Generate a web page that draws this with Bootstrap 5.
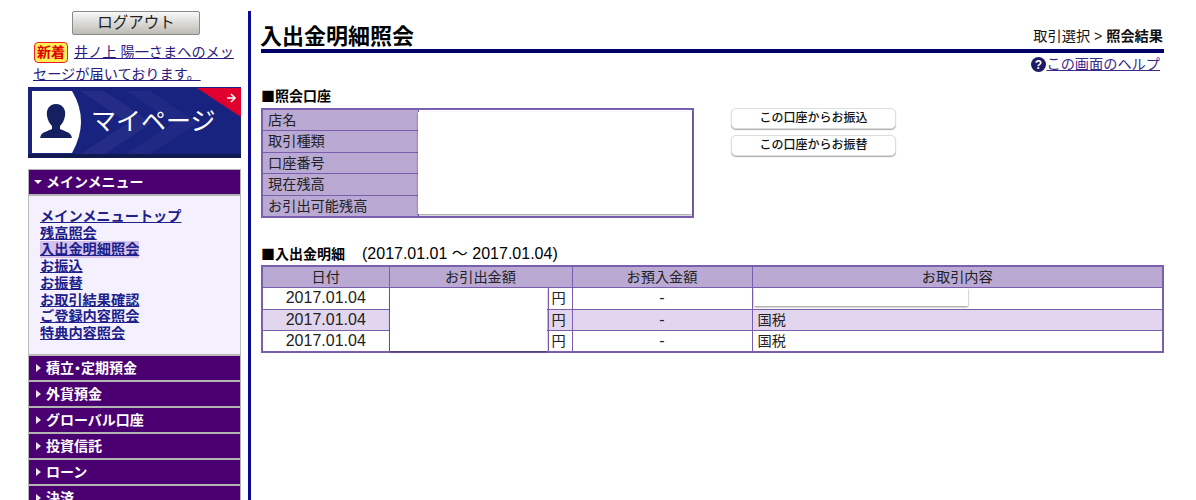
<!DOCTYPE html>
<html lang="ja">
<head>
<meta charset="UTF-8">
<title>入出金明細照会</title>
<link href="https://cdn.jsdelivr.net/npm/bootstrap@5.3.3/dist/css/bootstrap.min.css" rel="stylesheet">
<script src="https://cdn.jsdelivr.net/npm/bootstrap@5.3.3/dist/js/bootstrap.bundle.min.js"></script>
<style>
html, body { height: 500px; overflow: hidden; }
body { font-family: "Liberation Sans", "Noto Sans CJK JP", sans-serif; font-size: 14px; color: #111; background: #fff; }
.page-wrap { height: 500px; overflow: hidden; }
.side-col { width: 248px; flex: none; padding: 11px 7px 0 28px; }
.bar-col { width: 3px; flex: none; background: #0a0a96; margin-top: 11px; }
.main-col { flex: 1; padding: 0 32px 0 10px; }

.logout-btn { display: block; width: 128px; height: 24px; margin-left: 44px; padding: 0; font-size: 15.5px; line-height: 22px; color: #222; border: 1px solid #8a8a8a; border-radius: 2px; background: linear-gradient(#f8f8f8, #bdbcb4); }
.news-text { margin: 6px 0 0 5px; font-size: 14.2px; line-height: 22px; height: 46px; width: 206px; }
.news-text a { color: #2b1a80; }
.new-tag { display: inline-block; padding: 0 2px; line-height: 19px; font-weight: 700; font-size: 14px; color: #e00000; background: #ffee55; border: 1px solid #f02020; border-radius: 4px; margin: 0 2px 0 1px; }
.page-banner { display: block; width: 213px; height: 71px; }

.menu-head { display: flex; align-items: center; padding-left: 5px; background: #4b0072; color: #fff; font-weight: 700; font-size: 14px; border: 1px solid #b4b4b4; border-bottom-width: 2px; height: 27px; }
.menu-box { margin-top: 11px; }
.menu-body { height: 160px; padding: 12px 0 0 11px; background: #f4f0fe; border: 1px solid #bbb; border-top: 0; border-bottom-width: 2px; line-height: 16.7px; }
.menu-body a { display: block; width: fit-content; color: #20208a; font-weight: 700; font-size: 14.2px; }
.menu-body a.is-current { background: #d4c0ea; }
.arrow-down { width: 0; height: 0; margin-right: 4px; border-left: 4px solid transparent; border-right: 4px solid transparent; border-top: 4px solid #fff; }
.arrow-right { width: 0; height: 0; margin: 0 5px 0 2px; border-top: 4px solid transparent; border-bottom: 4px solid transparent; border-left: 5px solid #e8e8e8; }
.menu-closed { height: 26px; border-top: 0; }
.dot-tight { font-feature-settings: "palt"; }

.title-row { height: 53px; border-bottom: 4px solid #000066; }
.page-title { font-size: 22px; font-weight: 700; line-height: 26px; margin: 0 0 -1px -1px; color: #000; }
.crumbs { font-size: 14.2px; line-height: 18px; margin-bottom: 4px; margin-right: 1px; }
.help-row { height: 34px; padding: 3px 4px 0 0; line-height: 16px; }
.help-row a { color: #3a2a8c; font-size: 14.2px; }
.help-icon { display: inline-block; vertical-align: -3px; }
.sect-label { font-family: "Noto Sans CJK JP", sans-serif; font-size: 14px; font-weight: 700; line-height: 17px; margin: 0 0 4px; color: #000; }
.sect-label span { font-family: "Liberation Sans", "Noto Sans CJK JP", sans-serif; font-size: 16px; font-weight: 400; margin-left: 17px; }
.sect-tight { margin-bottom: 3px; }

.grid-wrap { position: relative; }
.acct-table { width: 433px; table-layout: fixed; }
.detail-table { width: 903px; table-layout: fixed; }
.acct-table, .detail-table { border-collapse: collapse; margin: 0; border: 2px solid #7a5fae; }
.acct-table > :not(caption) > * > *, .detail-table > :not(caption) > * > * { padding: 0 5px; border: 1px solid #7a5fae; font-size: 14.2px; line-height: 20px; height: 21.5px; color: #222; background: #fff; box-shadow: none; font-weight: 400; }
.acct-table > :not(caption) > * > th, .detail-table > :not(caption) > * > th { background: #b9a9d3; }
.detail-table > :not(caption) > * > th { text-align: center; }
.detail-table > :not(caption) > .row-alt > td { background: #e2d6ee; }
.detail-table > :not(caption) > * > .cell-mid { text-align: center; font-size: 16px; }
.detail-table > :not(caption) > * > .cell-yen { padding: 0 0 0 3px; }
.cover-box { position: absolute; background: #fff; box-shadow: 0 1px 2px rgba(0,0,0,.45); }
.cover-acct { left: 157px; top: 4px; width: 274px; height: 102px; }
.cover-amount { left: 129px; top: 23px; width: 157px; height: 63px; }
.cover-memo { left: 493px; top: 23px; width: 214px; height: 18px; }
.side-btn { display: block; width: 165px; height: 21px; padding: 0; font-size: 12px; line-height: 19px; font-weight: 500; color: #111; background: #fff; border: 1px solid #ddd; border-radius: 5px; box-shadow: 0 1px 1px #aaa; margin-bottom: 6px; }
.acct-row { gap: 37px; height: 137px; }
</style>
</head>
<body>
<div class="page-wrap d-flex">
  <!-- left menu -->
  <div class="side-col">
    <button type="button" class="logout-btn">ログアウト</button>
    <p class="news-text"><span class="new-tag">新着</span> <a href="#">井ノ上 陽一さまへのメッセージが届いております。</a></p>
    <svg class="page-banner" viewBox="0 0 213 71">
      <rect width="213" height="71" fill="#17237f"/>
      <path d="M52 4 L100 36 L52 67 H76 L124 36 L76 4 Z" fill="#242c86"/>
      <path d="M98 4 L146 36 L98 67 H122 L170 36 L122 4 Z" fill="#202a84"/>
      <path d="M4 4 H44 Q62 34 44 66 H4 Z" fill="#fff"/>
      <path d="M28 17 C21 17 18 23 19 29 C20 34 22 37 24 39 L24 42 C20 44 15 45 13 48 L12 51 H44 L43 48 C41 45 36 44 32 42 L32 39 C34 37 36 34 37 29 C38 23 35 17 28 17 Z" fill="#14205f"/>
      <path d="M169 1 H213 V30 Z" fill="#e0002d"/>
      <path d="M199 11 H207 M203 7 L207 11 L203 15" fill="none" stroke="#fff" stroke-width="1.6"/>
      <rect y="67" width="213" height="4" fill="#101a50"/>
      <text x="63" y="43" font-size="25" fill="#fff" font-family="Liberation Sans, Noto Sans CJK JP, sans-serif">マイページ</text>
    </svg>

    <div class="menu-box">
      <div class="menu-head"><span class="arrow-down"></span>メインメニュー</div>
      <div class="menu-body">
        <a href="#">メインメニュートップ</a>
        <a href="#">残高照会</a>
        <a href="#" class="is-current">入出金明細照会</a>
        <a href="#">お振込</a>
        <a href="#">お振替</a>
        <a href="#">お取引結果確認</a>
        <a href="#">ご登録内容照会</a>
        <a href="#">特典内容照会</a>
      </div>
      <div class="menu-head menu-closed"><span class="arrow-right"></span><span>積立<span class="dot-tight">・</span>定期預金</span></div>
      <div class="menu-head menu-closed"><span class="arrow-right"></span>外貨預金</div>
      <div class="menu-head menu-closed"><span class="arrow-right"></span>グローバル口座</div>
      <div class="menu-head menu-closed"><span class="arrow-right"></span>投資信託</div>
      <div class="menu-head menu-closed"><span class="arrow-right"></span>ローン</div>
      <div class="menu-head menu-closed"><span class="arrow-right"></span>決済</div>
    </div>
  </div>

  <div class="bar-col"></div>

  <!-- main -->
  <div class="main-col">
    <div class="title-row d-flex justify-content-between align-items-end">
      <h1 class="page-title">入出金明細照会</h1>
      <div class="crumbs">取引選択 &gt; <b>照会結果</b></div>
    </div>
    <div class="help-row text-end">
      <svg class="help-icon" width="15" height="15" viewBox="0 0 15 15"><circle cx="7.5" cy="7.5" r="7.5" fill="#1c1c66"/><text x="7.5" y="12" font-size="12" font-weight="700" text-anchor="middle" fill="#fff" font-family="Liberation Sans, sans-serif">?</text></svg><a href="#">この画面のヘルプ</a>
    </div>

    <p class="sect-label">■照会口座</p>
    <div class="d-flex acct-row">
      <div class="grid-wrap">
        <table class="table acct-table">
          <colgroup><col style="width:156px"><col></colgroup>
          <tbody>
            <tr><th>店名</th><td></td></tr>
            <tr><th>取引種類</th><td></td></tr>
            <tr><th>口座番号</th><td></td></tr>
            <tr><th>現在残高</th><td></td></tr>
            <tr><th>お引出可能残高</th><td></td></tr>
          </tbody>
        </table>
        <div class="cover-box cover-acct"></div>
      </div>
      <div>
        <button type="button" class="side-btn">この口座からお振込</button>
        <button type="button" class="side-btn">この口座からお振替</button>
      </div>
    </div>

    <p class="sect-label sect-tight">■入出金明細<span>(2017.01.01 〜 2017.01.04)</span></p>
    <div class="grid-wrap">
      <table class="table detail-table">
        <colgroup><col style="width:127px"><col style="width:159px"><col style="width:24px"><col style="width:180px"><col></colgroup>
        <thead>
          <tr><th>日付</th><th colspan="2">お引出金額</th><th>お預入金額</th><th>お取引内容</th></tr>
        </thead>
        <tbody>
          <tr><td class="cell-mid">2017.01.04</td><td></td><td class="cell-yen">円</td><td class="cell-mid">-</td><td></td></tr>
          <tr class="row-alt"><td class="cell-mid">2017.01.04</td><td></td><td class="cell-yen">円</td><td class="cell-mid">-</td><td>国税</td></tr>
          <tr><td class="cell-mid">2017.01.04</td><td></td><td class="cell-yen">円</td><td class="cell-mid">-</td><td>国税</td></tr>
        </tbody>
      </table>
      <div class="cover-box cover-amount"></div>
      <div class="cover-box cover-memo"></div>
    </div>
  </div>
</div>
</body>
</html>
